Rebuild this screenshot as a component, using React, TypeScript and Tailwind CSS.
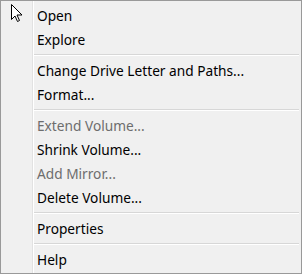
import React from "react";

type MenuEntry = { label: string; disabled?: boolean } | "sep";

const entries: MenuEntry[] = [
  { label: "Open" },
  { label: "Explore" },
  "sep",
  { label: "Change Drive Letter and Paths..." },
  { label: "Format..." },
  "sep",
  { label: "Extend Volume...", disabled: true },
  { label: "Shrink Volume..." },
  { label: "Add Mirror...", disabled: true },
  { label: "Delete Volume..." },
  "sep",
  { label: "Properties" },
  "sep",
  { label: "Help" },
];

const Cursor = () => (
  <svg
    className="absolute left-[9px] top-[2px]"
    width="14"
    height="20"
    viewBox="0 0 14 20"
  >
    <path
      d="M1.5 1.5 L1.5 16.5 L5 13 L7.5 18.5 L9.5 17.5 L7 12 L12 12 Z"
      fill="#fff"
      stroke="#000"
      strokeWidth="1"
      strokeLinejoin="miter"
    />
  </svg>
);

const App = () => {
  return (
    <div
      className="relative flex h-[274px] w-[302px] border border-[#999999] bg-[#f0f0f0] text-[13.7px] text-black"
      style={{ fontFamily: '"Noto Sans", "Open Sans", sans-serif' }}
    >
      <div className="w-[31px] shrink-0" />
      <div className="w-px shrink-0 bg-[#e2e2e2]" />
      <div className="w-px shrink-0 bg-white" />
      <div className="flex flex-1 flex-col pt-[3px]">
        {entries.map((e, i) =>
          e === "sep" ? (
            <div key={i} className="h-[7px] pt-[2px] pr-[2px]">
              <div className="h-px bg-[#d7d7d7]" />
              <div className="h-px bg-white" />
            </div>
          ) : (
            <div
              key={i}
              className={
                "flex h-[24px] items-center pl-[3px] " +
                (e.disabled ? "text-[#6d6d6d]" : "text-black")
              }
            >
              {e.label}
            </div>
          )
        )}
      </div>
      <Cursor />
    </div>
  );
};

export default App;
